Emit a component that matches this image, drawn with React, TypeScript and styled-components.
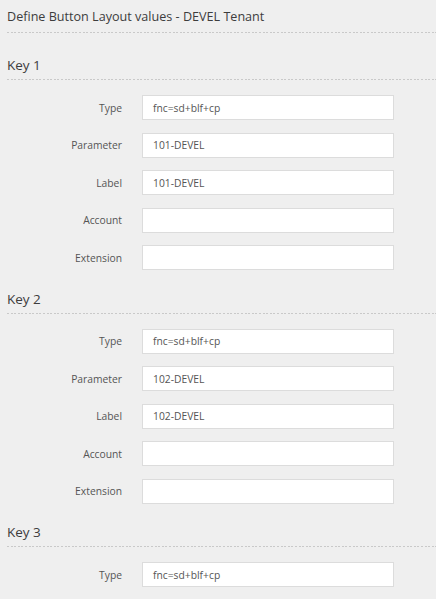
import React from "react";
import styled, { createGlobalStyle } from "styled-components";

const GlobalStyle = createGlobalStyle`
  html, body {
    margin: 0;
    padding: 0;
    background: #efefef;
  }
  body {
    font-family: "Open Sans", "Noto Sans", sans-serif;
    color: #444;
  }
`;

const Page = styled.div`
  padding: 7px 0 0 7px;
  width: 436px;
  height: 599px;
  box-sizing: border-box;
  overflow: hidden;
`;

const Divider = styled.div`
  height: 1px;
  background-image: repeating-linear-gradient(
    to right,
    #c9c9c9 0,
    #c9c9c9 2px,
    transparent 2px,
    transparent 3.6px
  );
`;

const Title = styled.h1`
  margin: 0 0 5px 0;
  font-size: 12.6px;
  line-height: 20px;
  font-weight: 400;
  color: #3d3d3d;
`;

const TitleBlock = styled.div`
  margin-bottom: 22px;
`;

const Section = styled.section`
  display: flex;
  flex-direction: column;
`;

const KeyHeading = styled.h2`
  margin: 0 0 4px 0;
  font-size: 13.5px;
  line-height: 20px;
  font-weight: 400;
  color: #3d3d3d;
`;

const Rows = styled.div`
  display: flex;
  flex-direction: column;
  gap: 12.5px;
  padding: 15px 0 18.5px 0;
`;

const Row = styled.div`
  display: grid;
  grid-template-columns: 115px 252px;
  column-gap: 20px;
  align-items: center;
`;

const Label = styled.label`
  text-align: right;
  font-size: 10.3px;
  color: #555;
`;

const Field = styled.div`
  height: 25px;
  box-sizing: border-box;
  background: #fff;
  border: 1px solid #dcdcdc;
  padding: 0 10px;
  display: flex;
  align-items: center;
  font-size: 10.3px;
  color: #555;
`;

type KeyData = {
  name: string;
  values: [string, string][];
};

const keys: KeyData[] = [
  {
    name: "Key 1",
    values: [
      ["Type", "fnc=sd+blf+cp"],
      ["Parameter", "101-DEVEL"],
      ["Label", "101-DEVEL"],
      ["Account", ""],
      ["Extension", ""],
    ],
  },
  {
    name: "Key 2",
    values: [
      ["Type", "fnc=sd+blf+cp"],
      ["Parameter", "102-DEVEL"],
      ["Label", "102-DEVEL"],
      ["Account", ""],
      ["Extension", ""],
    ],
  },
  {
    name: "Key 3",
    values: [["Type", "fnc=sd+blf+cp"]],
  },
];

export default function App() {
  return (
    <>
      <GlobalStyle />
      <Page>
        <TitleBlock>
          <Title>Define Button Layout values - DEVEL Tenant</Title>
          <Divider />
        </TitleBlock>
        {keys.map((k) => (
          <Section key={k.name}>
            <KeyHeading>{k.name}</KeyHeading>
            <Divider />
            <Rows>
              {k.values.map(([label, value]) => (
                <Row key={label}>
                  <Label>{label}</Label>
                  <Field>{value}</Field>
                </Row>
              ))}
            </Rows>
          </Section>
        ))}
      </Page>
    </>
  );
}
